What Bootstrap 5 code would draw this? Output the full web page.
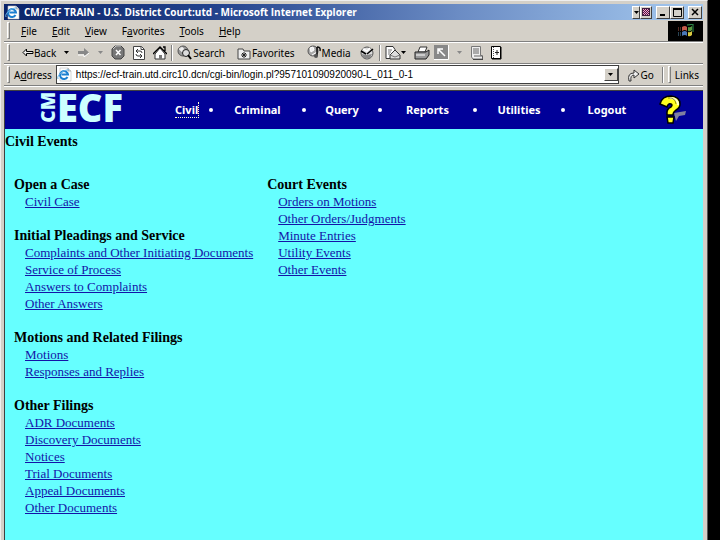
<!DOCTYPE html>
<html lang="en">
<head>
<meta charset="utf-8">
<meta name="viewport" content="width=device-width, initial-scale=1">
<title>CM/ECF TRAIN - U.S. District Court:utd</title>
<link rel="stylesheet" href="https://cdn.jsdelivr.net/npm/bootstrap@5.3.0/dist/css/bootstrap.min.css">
<style>
body{background:#000;font-family:"Noto Sans",sans-serif;font-size:10px;line-height:16px;color:#000}
svg{flex:none;display:block}
button{font:inherit;color:inherit;background:none;border:0;padding:0;white-space:nowrap}
.frame{background:#d4d0c8;margin-right:12px;padding:2px 4px 0 4px;border-right:1px solid #555;border-top:1px solid #eee;box-shadow:inset 1px 0 #eee}
.titlebar{height:16px;margin-top:1px;background:linear-gradient(90deg,#0a246a,#23428c 30%,#6b8cc4 65%,#a6caf0);color:#fff;font-family:"Open Sans",sans-serif;font-weight:700;font-size:10px;padding:0 1px 0 1px}
.winbtn{width:14px;height:13px;background:#d4d0c8;border:1px solid;border-color:#fff #404040 #404040 #fff;display:flex;align-items:center;justify-content:center}
.winbtn.slim{width:8px}.winbtn.mid{width:12px}
.bar{height:22px;border-bottom:1px solid #808080;box-shadow:0 1px #fff;padding-left:3px}
.grip{width:3px;height:17px;border:1px solid;border-color:#fff #808080 #808080 #fff;flex:none}
.menus{gap:15px;padding-left:11px}
.flag{width:35px;height:20px;background:#000}
.rule{width:2px;height:16px;border-left:1px solid #808080;border-right:1px solid #fff}
.addr{min-width:0;background:#fff;border:1px solid #404040;height:19px}
.addr input{border:0;outline:0;padding:0 0 0 4px;font-family:"Liberation Sans",sans-serif;font-size:10px;line-height:16px;min-width:0;background:none;color:#000}
.view{background:#6ff;border-left:1px solid #404040;border-top:1px solid #404040;margin-top:4px;min-height:calc(100vh - 90px);font-family:"Liberation Serif",serif;font-size:13px;line-height:17px}
.ecf{background:#000099;height:38px;font-family:"Noto Sans",sans-serif;font-weight:700;font-size:11px;line-height:14px}
.ecf a{color:#fff;text-decoration:none;text-align:center}
.logo{color:#cff;font-family:"Open Sans",sans-serif;padding-left:34px;padding-bottom:6px;width:170px;flex:none}
.cm{writing-mode:vertical-rl;transform:rotate(180deg);font-size:19px;line-height:18px;font-weight:800}
.big{font-size:38px;line-height:34px;font-weight:800}
.dot{width:4px;height:4px;border-radius:2px;background:#fff;flex:none}
.c1{width:24px;margin-right:10px}.c2{width:89px}.c3{width:72px}.c4{width:91px}.c5{width:84px}.c6{width:84px}
.c1 span{border:1px dotted #ffc;border-width:0 1px 1px 0}
.lists{padding:26px 9px 0;gap:14px}
.lists h2{font-size:14px;line-height:17px;font-weight:700;margin:0}
.lists ul{padding-left:11px;margin-bottom:17px}
.lists a{color:#1414a8}
.pagehead{font-size:14px;line-height:17px;font-weight:700;margin:0;padding-top:4px}
</style>
<script src="https://cdn.jsdelivr.net/npm/bootstrap@5.3.0/dist/js/bootstrap.bundle.min.js"></script>
</head>
<body>
<svg width="0" height="0" class="position-absolute" aria-hidden="true"><defs>
<symbol id="ie" viewBox="0 0 15 15"><path d="M3 1h8l3 3v10H3z" fill="#fff" stroke="#bbb" stroke-width=".6"/><path d="M11 1v3h3" fill="#ddd" stroke="#888" stroke-width=".6"/><path d="M10.500 10a4 4 0 1 1 .5-2.500H4.500" fill="none" stroke="#1c7fd0" stroke-width="2"/><path d="M1 12C-1 8 8 2 12 3" fill="none" stroke="#69b5e8"/></symbol>
<symbol id="down" viewBox="0 0 5 3"><path d="M0 0h5L2.500 3z"/></symbol>
</defs></svg>
<div class="frame">
<header>
<div class="titlebar d-flex align-items-center">
<svg width="15" height="15"><use href="#ie"/></svg>
<span class="flex-grow-1 text-nowrap overflow-hidden ps-1">CM/ECF TRAIN - U.S. District Court:utd - Microsoft Internet Explorer</span>
<button class="winbtn slim" aria-label="Options"><svg width="5" height="3"><use href="#down"/></svg></button>
<button class="winbtn mid" aria-label="Screen"><svg width="8" height="8"><path fill="#402040" d="M0 0h8v8H0z"/><path d="M1 1.500h6M1 3.500h6M1 5.500h6" stroke="#f9c" stroke-dasharray="1 1"/><path d="M2 2.500h5M2 4.500h5M2 6.500h5" stroke="#f9c" stroke-dasharray="1 1"/></svg></button>
<button class="winbtn ms-1" aria-label="Minimize"><svg width="8" height="8"><path d="M1 6h5v2H1z"/></svg></button>
<button class="winbtn" aria-label="Maximize"><svg width="9" height="9"><path d="M.5 1h8v7.500h-8z" fill="none" stroke="#000"/><path d="M0 0h9v2H0z"/></svg></button>
<button class="winbtn ms-1" aria-label="Close"><svg width="8" height="8"><path d="M1 1l6 6M7 1L1 7" stroke="#000" stroke-width="1.500"/></svg></button>
</div>
<nav class="bar d-flex align-items-center" aria-label="Menu">
<span class="grip"></span>
<div class="menus d-flex flex-grow-1"><button><u>F</u>ile</button><button><u>E</u>dit</button><button><u>V</u>iew</button><button>F<u>a</u>vorites</button><button><u>T</u>ools</button><button><u>H</u>elp</button></div>
<span class="flag d-flex align-items-center justify-content-center"><svg width="17" height="14"><path d="M5 3q3-2 5 0v4q-2-2-5 0z" fill="#c65b4a"/><path d="M11 3q2 1 4-1v4q-2 2-4 1z" fill="#5a9a40"/><path d="M5 8q3-2 5 0v4q-2-2-5 0z" fill="#4a78b8"/><path d="M11 8q2 1 4-1v4q-2 2-4 1z" fill="#d8c840"/><path d="M1 4h3M1 6h3" stroke="#a54" stroke-dasharray="1 1"/><path d="M1 9h3M1 11h3" stroke="#58a" stroke-dasharray="1 1"/><path d="M10 1q3 0 6-1v8" fill="none" stroke="#395" /></svg></span>
</nav>
<div class="bar d-flex align-items-center" role="toolbar" aria-label="Navigation">
<span class="grip"></span>
<button class="d-flex align-items-center ms-2 ps-1"><svg width="12" height="9"><path d="M4.500 1L1 4.500 4.500 8V5.500H11v-2H4.500z" fill="#eee" stroke="#000"/></svg><span>Back</span></button>
<svg class="ms-2" width="5" height="3"><use href="#down"/></svg>
<button class="ms-2" aria-label="Forward"><svg width="13" height="9"><path d="M1 3h6V0l5 4.500L7 9V6H1z" fill="#888"/><path d="M1 7h6v2l5-4" fill="none" stroke="#fff"/></svg></button>
<svg class="ms-2" width="5" height="3" fill="#888"><use href="#down"/></svg>
<button class="ms-2" aria-label="Stop"><svg width="14" height="15"><path d="M4 1h6l3 3v7l-3 3H4l-3-3V4z" fill="#777" stroke="#444"/><path d="M2 4l3-3h5" fill="none" stroke="#ccc"/><path d="M5 5l4.500 5M9.500 5L5 10" stroke="#fff" stroke-width="1.500"/></svg></button>
<button class="ms-2" aria-label="Refresh"><svg width="12" height="14"><path d="M.5.5h8l3 3v10H.5z" fill="#fff" stroke="#444"/><path d="M8 .5v3h3" fill="none" stroke="#444"/><path d="M5 3L3 5l2 2M3 5h4q2 0 2 2M7 8l2 2-2 2M9 10H5q-2 0-2-2" fill="none" stroke="#333"/></svg></button>
<button class="ms-2" aria-label="Home"><svg width="14" height="14"><path d="M2 8v5h10V8L7 2z" fill="#fff" stroke="#333"/><path d="M0 8l7-7 7 7M10 1h2v4" fill="none" stroke="#000" stroke-width="1.300"/><path d="M6 9h3v4H6z" fill="#777"/></svg></button>
<span class="rule mx-1"></span>
<button class="d-flex align-items-center"><svg width="16" height="15"><circle cx="6" cy="6" r="5" fill="#999" stroke="#555"/><path d="M2 4l3-2 2 2-2 3zM6 8l4-2" fill="#eee" stroke="#ddd"/><circle cx="9" cy="8" r="3.500" fill="#ddd" stroke="#222"/><path d="M11 10l3 4" stroke="#000" stroke-width="2"/></svg><span>Search</span></button>
<button class="d-flex align-items-center ms-2 ps-1"><svg width="15" height="14"><path d="M1 3h5l1 2h6v8H1z" fill="#eee" stroke="#444"/><path d="M4 9h6M7 6v6M5 7l4 4M9 7l-4 4" stroke="#222"/></svg><span>Favorites</span></button>
<button class="d-flex align-items-center ms-2 ps-1"><svg width="15" height="15"><circle cx="6" cy="6" r="5" fill="#aaa" stroke="#555"/><path d="M3 3l3-1 1 3-3 2zM5 10l5-3" fill="#eee" stroke="#fff"/><path d="M10 2v9M10 2q4 0 3 4" fill="none" stroke="#111" stroke-width="1.500"/><circle cx="9" cy="11" r="2" fill="#555"/></svg><span>Media</span></button>
<button class="ms-2" aria-label="History"><svg width="16" height="14"><circle cx="8" cy="7" r="6" fill="#ddd" stroke="#555"/><path d="M2 8l3 4h6l2-4-5 1z" fill="#888"/><path d="M8 8l6-5M2 5l5 3" stroke="#000" stroke-width="1.500"/><path d="M4 3l4 2 3-3" fill="none" stroke="#fff" stroke-width="1.500"/></svg></button>
<span class="rule mx-1"></span>
<button class="d-flex align-items-center" aria-label="Mail"><svg width="16" height="14"><path d="M1 .5h7l2 3v9H1z" fill="#fff" stroke="#333"/><path d="M3 4h4M3 6h3M3 8h2" stroke="#777"/><path d="M5 9l5-5 5 5v4H5z" fill="#ddd" stroke="#333"/><path d="M5 9l5 2 5-2" fill="none" stroke="#777"/></svg><svg width="5" height="3"><use href="#down"/></svg></button>
<button class="ms-2" aria-label="Print"><svg width="16" height="14"><path d="M4 6l2-5h7l-2 5z" fill="#fff" stroke="#333"/><path d="M1 6h11l3-2v5l-3 4H1z" fill="#999" stroke="#222"/><path d="M2 9h9" stroke="#fff"/></svg></button>
<button class="ms-1" aria-label="Edit"><svg width="15" height="15"><path d="M0 0h14v14H0z" fill="#888"/><path d="M4 9V4h5M4 4l7 7" fill="none" stroke="#fff" stroke-width="1.500"/><path d="M14.500 0v14.500H0" fill="none" stroke="#fff"/></svg></button>
<svg class="ms-2" width="5" height="3" fill="#888"><use href="#down"/></svg>
<button class="ms-2" aria-label="Discuss"><svg width="13" height="14"><path d="M1.500 .5h9v9h2v3.500H3l-1.500-2z" fill="#eee" stroke="#777"/><path d="M3 3h6M3 5h6M3 7h6M4 10h8" stroke="#666"/><path d="M3 13.500h10V10" fill="none" stroke="#444"/></svg></button>
<button class="ms-2" aria-label="Page tools"><svg width="11" height="14"><path d="M.5.500h9v12h-9z" fill="#fff" stroke="#000"/><path d="M10 1v12H1" fill="none" stroke="#000"/><path d="M2.500 1v11" stroke="#555" stroke-dasharray="1 1"/><path d="M6 4v5M4 6.500h4" stroke="#222"/></svg></button>
</div>
<div class="bar d-flex align-items-center">
<span class="grip"></span>
<label for="address" class="ps-1 pe-1">A<u>d</u>dress</label>
<div class="addr d-flex align-items-center flex-grow-1"><svg width="15" height="15"><use href="#ie"/></svg><input id="address" class="flex-grow-1" value="https://ecf-train.utd.circ10.dcn/cgi-bin/login.pl?957101090920090-L_011_0-1"><button class="winbtn" aria-label="Address list"><svg width="5" height="3"><use href="#down"/></svg></button></div>
<button class="d-flex align-items-center ms-2"><svg width="14" height="14"><path d="M2 13Q0 5 7 5V2l5 4-5 4V7Q3 7 4 13z" fill="#eee" stroke="#333"/></svg><span>Go</span></button>
<span class="rule ms-2 me-1"></span><span class="grip"></span><button class="px-1">Links</button>
</div>
</header>
<div class="view">
<nav class="ecf d-flex align-items-center" aria-label="CM/ECF">
<div class="logo d-flex align-items-center"><span class="cm">CM</span><span class="big">ECF</span></div>
<a class="c1" href="#civil"><span>Civil</span></a><i class="dot"></i>
<a class="c2" href="#criminal">Criminal</a><i class="dot"></i>
<a class="c3" href="#query">Query</a><i class="dot"></i>
<a class="c4" href="#reports">Reports</a><i class="dot"></i>
<a class="c5" href="#utilities">Utilities</a><i class="dot"></i>
<a class="c6" href="#logout">Logout</a>
<a class="ms-auto me-3" href="#help" aria-label="Help"><svg width="28" height="30"><path d="M15 18l12-2-1 4-6 1-3 5z" fill="#8080a0"/><path d="M1 9Q3 1 12 1q9 1 9 8 0 4-4 6-3 2-3 5H8q-1-6 4-8 2-2 0-3-3-1-4 3z" fill="#ffff20" stroke="#000" stroke-width="1.500"/><path d="M8 22h7l-1 6H9z" fill="#ffff20" stroke="#000" stroke-width="1.500"/><path d="M11 3q8 0 8 7" fill="none" stroke="#ffc" stroke-width="2"/><path d="M9 3q7-1 8 6" fill="none" stroke="#660" stroke-width=".7"/></svg></a>
</nav>
<main>
<h1 class="pagehead" id="civil">Civil Events</h1>
<div class="lists d-flex align-items-start">
<div>
<h2>Open a Case</h2><ul class="list-unstyled"><li><a href="#a1">Civil Case</a></li></ul>
<h2>Initial Pleadings and Service</h2><ul class="list-unstyled"><li><a href="#b1">Complaints and Other Initiating Documents</a></li><li><a href="#b2">Service of Process</a></li><li><a href="#b3">Answers to Complaints</a></li><li><a href="#b4">Other Answers</a></li></ul>
<h2>Motions and Related Filings</h2><ul class="list-unstyled"><li><a href="#c1">Motions</a></li><li><a href="#c2">Responses and Replies</a></li></ul>
<h2>Other Filings</h2><ul class="list-unstyled"><li><a href="#d1">ADR Documents</a></li><li><a href="#d2">Discovery Documents</a></li><li><a href="#d3">Notices</a></li><li><a href="#d4">Trial Documents</a></li><li><a href="#d5">Appeal Documents</a></li><li><a href="#d6">Other Documents</a></li></ul>
</div>
<div>
<h2>Court Events</h2><ul class="list-unstyled"><li><a href="#e1">Orders on Motions</a></li><li><a href="#e2">Other Orders/Judgments</a></li><li><a href="#e3">Minute Entries</a></li><li><a href="#e4">Utility Events</a></li><li><a href="#e5">Other Events</a></li></ul>
</div>
</div>
</main>
</div>
</div>
</body>
</html>
